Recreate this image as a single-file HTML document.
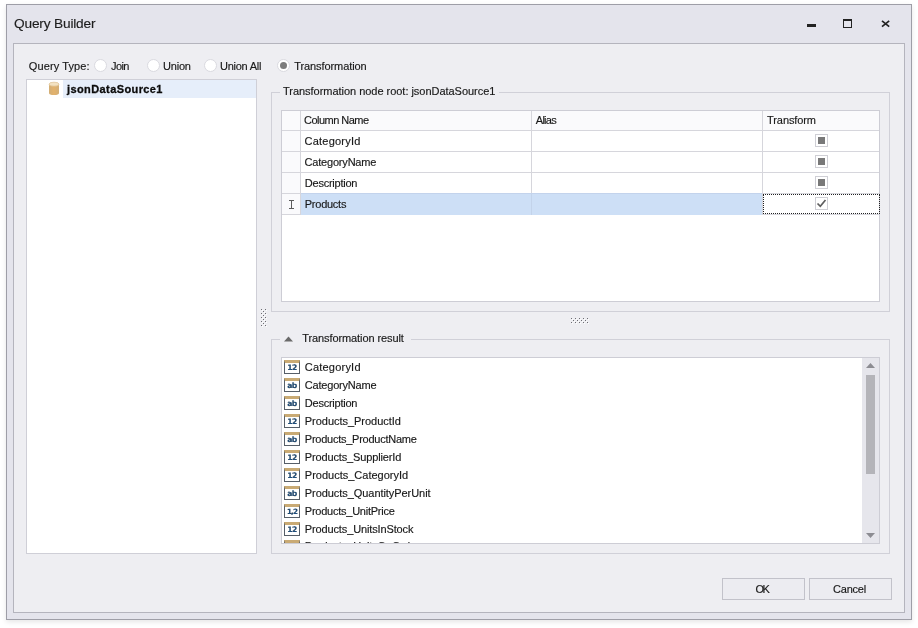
<!DOCTYPE html>
<html><head><meta charset="utf-8"><title>Query Builder</title>
<style>
html,body{margin:0;padding:0;background:#fff;}
body{width:918px;height:628px;position:relative;overflow:hidden;font-family:"Liberation Sans",sans-serif;font-size:11px;color:#181818;-webkit-text-stroke:0.15px #181818;}
.abs{position:absolute;}
#win{left:6px;top:4px;width:904px;height:614px;border:1px solid #9e9ea7;background:#e4e4ec;box-shadow:0 2px 5px rgba(0,0,0,0.10);}
#title{left:14px;top:16px;font-size:13.7px;letter-spacing:-0.18px;color:#1e1e1e;line-height:16px;white-space:nowrap;}
#content{left:13px;top:43px;width:890px;height:568px;border:1px solid #b4b4bd;background:#eeeef2;}
.t{position:absolute;white-space:nowrap;line-height:13px;height:13px;}
.radio{position:absolute;width:11px;height:11px;border:1px solid #dadae0;border-radius:50%;background:#fff;}
.radio.on::after{content:"";position:absolute;left:2px;top:2px;width:7px;height:7px;border-radius:50%;background:#7c7c7c;}
#tree{left:26px;top:79px;width:229px;height:473px;border:1px solid #cfcfd7;background:#fff;}
#treesel{left:63px;top:80px;width:193px;height:18px;background:#e6eefa;}
.grp{position:absolute;border:1px solid #d0d0d8;}
.grid{position:absolute;background:#fff;border:1px solid #cdcdd5;}
.hl{position:absolute;background:#d6d6dc;height:1px;}
.vl{position:absolute;background:#d6d6dc;width:1px;}
.cb{position:absolute;width:11px;height:11px;border:1px solid #cfcfd5;background:#fff;}
.cb i{position:absolute;left:2px;top:2px;width:7px;height:7px;background:#797979;}
.ico{position:absolute;width:14px;height:10px;border:1px solid #565e68;border-top:3px solid #c9aa74;background:#fff;font-family:'DejaVu Sans',sans-serif;font-weight:bold;font-size:7.6px;line-height:10.5px;text-align:center;color:#1d4f7f;letter-spacing:-0.6px;overflow:hidden;}
.btn{position:absolute;height:20px;width:81px;border:1px solid #c2c2ca;background:#ececf1;text-align:center;line-height:20px;}
</style></head><body>
<div id="root" style="position:absolute;left:0;top:0;width:918px;height:628px;will-change:transform;">
<div id="win" class="abs"></div>
<div id="title" class="abs">Query Builder</div>
<!-- window buttons -->
<div class="abs" style="left:807px;top:24px;width:9px;height:3px;background:#222;"></div>
<div class="abs" style="left:843px;top:19px;width:7px;height:6px;border:1px solid #222;border-top-width:2px;"></div>
<svg class="abs" style="left:880px;top:18px" width="12" height="12" viewBox="0 0 12 12"><path d="M2 2.8 L9.2 8.6 M9.2 2.8 L2 8.6" stroke="#222" stroke-width="1.7" fill="none"/></svg>

<div id="content" class="abs"></div>

<!-- query type -->
<div class="t" style="left:28.8px;top:60px;letter-spacing:0.11px;">Query Type:</div>
<div class="radio" style="left:94px;top:59px;"></div><div class="t" style="left:111px;top:60px;letter-spacing:-0.6px;">Join</div>
<div class="radio" style="left:147px;top:59px;"></div><div class="t" style="left:163px;top:60px;letter-spacing:-0.2px;">Union</div>
<div class="radio" style="left:204px;top:59px;"></div><div class="t" style="left:220px;top:60px;letter-spacing:-0.25px;">Union All</div>
<div class="radio on" style="left:277px;top:59px;"></div><div class="t" style="left:294.2px;top:60px;letter-spacing:-0.08px;">Transformation</div>

<!-- tree -->
<div id="tree" class="abs"></div>
<div id="treesel" class="abs"></div>
<svg class="abs" style="left:48px;top:81px" width="12" height="15" viewBox="0 0 12 15"><defs><linearGradient id="cg" x1="0" x2="1" y1="0" y2="0"><stop offset="0" stop-color="#d2ae76"/><stop offset="0.5" stop-color="#e3b26c"/><stop offset="1" stop-color="#d2ae76"/></linearGradient></defs><path d="M1 3.2 L1 12 A5 2 0 0 0 11 12 L11 3.2 Z" fill="url(#cg)"/><ellipse cx="6" cy="3.2" rx="5" ry="2" fill="#f3e2c2" stroke="#d9b781" stroke-width="0.6"/></svg>
<div class="t" style="left:67px;top:83px;font-weight:bold;letter-spacing:0.4px;color:#0c0c0c;-webkit-text-stroke:0.3px #0c0c0c;">jsonDataSource1</div>

<!-- splitter dots -->
<svg class="abs" style="left:260px;top:308px" width="8" height="20" shape-rendering="crispEdges"><rect x="2" y="2" width="1" height="1" fill="#fff"/><rect x="6" y="2" width="1" height="1" fill="#fff"/><rect x="4" y="4" width="1" height="1" fill="#fff"/><rect x="2" y="6" width="1" height="1" fill="#fff"/><rect x="6" y="6" width="1" height="1" fill="#fff"/><rect x="4" y="8" width="1" height="1" fill="#fff"/><rect x="2" y="10" width="1" height="1" fill="#fff"/><rect x="6" y="10" width="1" height="1" fill="#fff"/><rect x="4" y="12" width="1" height="1" fill="#fff"/><rect x="2" y="14" width="1" height="1" fill="#fff"/><rect x="6" y="14" width="1" height="1" fill="#fff"/><rect x="4" y="16" width="1" height="1" fill="#fff"/><rect x="2" y="18" width="1" height="1" fill="#fff"/><rect x="6" y="18" width="1" height="1" fill="#fff"/><rect x="1" y="1" width="1" height="1" fill="#6e6e74"/><rect x="5" y="1" width="1" height="1" fill="#6e6e74"/><rect x="3" y="3" width="1" height="1" fill="#6e6e74"/><rect x="1" y="5" width="1" height="1" fill="#6e6e74"/><rect x="5" y="5" width="1" height="1" fill="#6e6e74"/><rect x="3" y="7" width="1" height="1" fill="#6e6e74"/><rect x="1" y="9" width="1" height="1" fill="#6e6e74"/><rect x="5" y="9" width="1" height="1" fill="#6e6e74"/><rect x="3" y="11" width="1" height="1" fill="#6e6e74"/><rect x="1" y="13" width="1" height="1" fill="#6e6e74"/><rect x="5" y="13" width="1" height="1" fill="#6e6e74"/><rect x="3" y="15" width="1" height="1" fill="#6e6e74"/><rect x="1" y="17" width="1" height="1" fill="#6e6e74"/><rect x="5" y="17" width="1" height="1" fill="#6e6e74"/></svg>
<svg class="abs" style="left:570px;top:317px" width="20" height="8" shape-rendering="crispEdges"><rect x="2" y="2" width="1" height="1" fill="#fff"/><rect x="6" y="2" width="1" height="1" fill="#fff"/><rect x="10" y="2" width="1" height="1" fill="#fff"/><rect x="14" y="2" width="1" height="1" fill="#fff"/><rect x="18" y="2" width="1" height="1" fill="#fff"/><rect x="4" y="4" width="1" height="1" fill="#fff"/><rect x="8" y="4" width="1" height="1" fill="#fff"/><rect x="12" y="4" width="1" height="1" fill="#fff"/><rect x="16" y="4" width="1" height="1" fill="#fff"/><rect x="2" y="6" width="1" height="1" fill="#fff"/><rect x="6" y="6" width="1" height="1" fill="#fff"/><rect x="10" y="6" width="1" height="1" fill="#fff"/><rect x="14" y="6" width="1" height="1" fill="#fff"/><rect x="18" y="6" width="1" height="1" fill="#fff"/><rect x="1" y="1" width="1" height="1" fill="#6e6e74"/><rect x="5" y="1" width="1" height="1" fill="#6e6e74"/><rect x="9" y="1" width="1" height="1" fill="#6e6e74"/><rect x="13" y="1" width="1" height="1" fill="#6e6e74"/><rect x="17" y="1" width="1" height="1" fill="#6e6e74"/><rect x="3" y="3" width="1" height="1" fill="#6e6e74"/><rect x="7" y="3" width="1" height="1" fill="#6e6e74"/><rect x="11" y="3" width="1" height="1" fill="#6e6e74"/><rect x="15" y="3" width="1" height="1" fill="#6e6e74"/><rect x="1" y="5" width="1" height="1" fill="#6e6e74"/><rect x="5" y="5" width="1" height="1" fill="#6e6e74"/><rect x="9" y="5" width="1" height="1" fill="#6e6e74"/><rect x="13" y="5" width="1" height="1" fill="#6e6e74"/><rect x="17" y="5" width="1" height="1" fill="#6e6e74"/></svg>

<!-- group 1 -->
<div class="grp" style="left:271px;top:92px;width:617px;height:218px;"></div>
<div class="t" style="left:280px;top:85px;background:#eeeef2;padding:0 4px 0 3px;letter-spacing:-0.03px;">Transformation node root: jsonDataSource1</div>
<div class="grid" style="left:281px;top:110px;width:597px;height:190px;"></div>
<div class="abs" style="left:282px;top:111px;width:597px;height:19px;background:#fafafc;"></div><div class="abs" style="left:282px;top:111px;width:18px;height:104px;background:#fafafc;"></div>
<!-- grid lines -->
<div class="hl" style="left:282px;top:130px;width:597px;"></div>
<div class="hl" style="left:282px;top:151px;width:597px;"></div>
<div class="hl" style="left:282px;top:172px;width:597px;"></div>
<div class="hl" style="left:282px;top:193px;width:597px;"></div>
<div class="hl" style="left:282px;top:214px;width:597px;"></div>
<div class="vl" style="left:300px;top:111px;height:104px;"></div>
<div class="vl" style="left:531px;top:111px;height:104px;"></div>
<div class="vl" style="left:762px;top:111px;height:104px;"></div>
<!-- selected row -->
<div class="abs" style="left:301px;top:193px;width:461px;height:22px;background:#cddff6;border-top:1px solid #c3d3ec;box-sizing:border-box;"></div>
<div class="vl" style="left:531px;top:194px;height:21px;background:#c3d3ea;"></div>
<div class="abs" style="left:763px;top:194px;width:115px;height:18px;border:1px dotted #222;"></div>
<div class="t" style="left:304px;top:114px;letter-spacing:-0.52px;">Column Name</div>
<div class="t" style="left:535.8px;top:114px;letter-spacing:-0.75px;">Alias</div>
<div class="t" style="left:767.1px;top:114px;letter-spacing:-0.1px;">Transform</div>
<div class="t" style="left:304.6px;top:135px;letter-spacing:0.21px;">CategoryId</div>
<div class="t" style="left:304.6px;top:156px;letter-spacing:-0.2px;">CategoryName</div>
<div class="t" style="left:304.8px;top:177px;letter-spacing:-0.24px;">Description</div>
<div class="t" style="left:304.8px;top:198px;letter-spacing:-0.26px;">Products</div>
<svg class="abs" style="left:289px;top:200px" width="5" height="9" viewBox="0 0 5 9"><path d="M0 0.5 H5 M0 8.5 H5 M2.5 0.5 V8.5" stroke="#5c5c5c" stroke-width="1" fill="none"/></svg>
<div class="cb" style="left:815px;top:134px;"><i></i></div>
<div class="cb" style="left:815px;top:155px;"><i></i></div>
<div class="cb" style="left:815px;top:176px;"><i></i></div>
<div class="cb" style="left:815px;top:197px;"></div>
<svg class="abs" style="left:815px;top:197px" width="13" height="13" viewBox="0 0 13 13"><path d="M2.5 6.5 L5.3 9.3 L10.5 3" stroke="#5e5e5e" stroke-width="1.7" fill="none"/></svg>

<!-- group 2 -->
<div class="grp" style="left:271px;top:339px;width:617px;height:213px;"></div>
<div class="t" style="left:280px;top:332px;background:#eeeef2;width:131px;"></div>
<svg class="abs" style="left:284px;top:336px" width="10" height="6" viewBox="0 0 10 6"><path d="M0 5.5 L4.5 0.5 L9 5.5 Z" fill="#6a6a6a"/></svg>
<div class="t" style="left:302.2px;top:332px;letter-spacing:-0.09px;">Transformation result</div>
<div class="grid" id="list" style="left:281px;top:357px;width:597px;height:185px;overflow:hidden;">
</div>
<div class="abs" style="left:862px;top:358px;width:17px;height:185px;background:#e6e6ec;"></div>
<div class="abs" style="left:866px;top:375px;width:9px;height:99px;background:#b4b4b9;"></div>
<svg class="abs" style="left:866px;top:363px" width="9" height="5" viewBox="0 0 9 5"><path d="M0 5 L4.5 0 L9 5 Z" fill="#8c8c92"/></svg>
<svg class="abs" style="left:866px;top:533px" width="9" height="5" viewBox="0 0 9 5"><path d="M0 0 L4.5 5 L9 0 Z" fill="#8c8c92"/></svg>

<div id="rows" class="abs" style="left:282px;top:358px;width:580px;height:185px;overflow:hidden;">
<div class="ico" style="left:2px;top:2px;">12</div><div class="t" style="left:22.8px;top:3px;letter-spacing:0.21px;">CategoryId</div>
<div class="ico" style="left:2px;top:20px;">ab</div><div class="t" style="left:22.8px;top:21px;letter-spacing:-0.2px;">CategoryName</div>
<div class="ico" style="left:2px;top:38px;">ab</div><div class="t" style="left:22.8px;top:39px;letter-spacing:-0.24px;">Description</div>
<div class="ico" style="left:2px;top:56px;">12</div><div class="t" style="left:22.8px;top:57px;letter-spacing:-0.03px;">Products_ProductId</div>
<div class="ico" style="left:2px;top:74px;">ab</div><div class="t" style="left:22.8px;top:75px;letter-spacing:-0.25px;">Products_ProductName</div>
<div class="ico" style="left:2px;top:92px;">12</div><div class="t" style="left:22.8px;top:93px;letter-spacing:-0.14px;">Products_SupplierId</div>
<div class="ico" style="left:2px;top:110px;">12</div><div class="t" style="left:22.8px;top:111px;letter-spacing:0px;">Products_CategoryId</div>
<div class="ico" style="left:2px;top:128px;">ab</div><div class="t" style="left:22.8px;top:129px;letter-spacing:-0.06px;">Products_QuantityPerUnit</div>
<div class="ico" style="left:2px;top:146px;letter-spacing:-0.9px;font-size:7.2px;">1,2</div><div class="t" style="left:22.8px;top:147px;letter-spacing:-0.24px;">Products_UnitPrice</div>
<div class="ico" style="left:2px;top:164px;">12</div><div class="t" style="left:22.8px;top:165px;letter-spacing:-0.13px;">Products_UnitsInStock</div>
<div class="ico" style="left:2px;top:182px;">12</div><div class="t" style="left:22.8px;top:182px;letter-spacing:-0.13px;">Products_UnitsOnOrder</div>
</div>

<!-- buttons -->
<div class="btn" style="left:722px;top:578px;letter-spacing:-1.5px;text-indent:-3px;">OK</div>
<div class="btn" style="left:809px;top:578px;letter-spacing:-0.2px;text-indent:-2px;">Cancel</div>
</div>
</body></html>
